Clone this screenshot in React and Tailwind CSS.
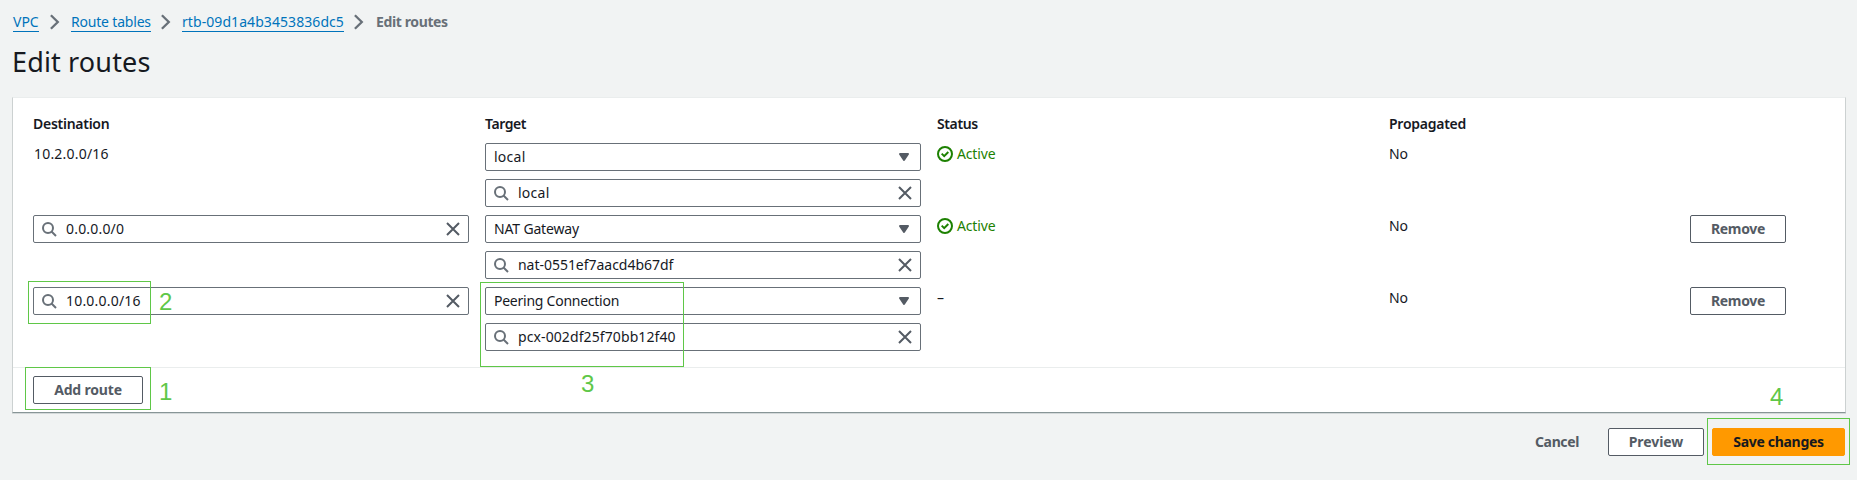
import React from "react";

function Icon({ children, className = "" }) {
  return (
    <svg width="16" height="16" viewBox="0 0 16 16" fill="none" stroke="currentColor" strokeWidth="2" className={"block shrink-0 " + className}>
      {children}
    </svg>
  );
}

const SearchIcon = () => (
  <Icon className="text-[#687078]">
    <circle cx="7" cy="7" r="5" />
    <path d="m15 15-4.5-4.5" />
  </Icon>
);

const CloseIcon = () => (
  <Icon className="text-[#545b64]">
    <path d="m2 2 12 12M14 2 2 14" />
  </Icon>
);

const CaretIcon = () => (
  <Icon className="text-[#545b64]">
    <path d="M4 5h8l-4 6-4-6z" fill="currentColor" strokeLinejoin="round" />
  </Icon>
);

const CheckIcon = () => (
  <Icon>
    <circle cx="8" cy="8" r="7" />
    <path d="m4.7 7.6 2.5 2.5 4.1-4.1" />
  </Icon>
);

const Chevron = () => (
  <svg width="12" height="16" viewBox="0 0 12 16" fill="none" stroke="#687078" strokeWidth="2.3" className="block">
    <path d="m1.9 1.2 6.9 6.8-6.9 6.8" />
  </svg>
);

function SearchField({ value, tracking }) {
  return (
    <div className="flex h-7 w-[436px] items-center rounded-[2px] border border-[#687078] bg-white pr-[7px] pl-[7px]">
      <SearchIcon />
      <span className={"ml-[9px] grow " + tracking}>{value}</span>
      <CloseIcon />
    </div>
  );
}

function SelectField({ value, tracking }) {
  return (
    <div className="flex h-7 w-[436px] items-center rounded-[2px] border border-[#687078] bg-white pr-2 pl-[8px]">
      <span className={"grow " + tracking}>{value}</span>
      <CaretIcon />
    </div>
  );
}

function Button({ children, className }) {
  return (
    <button className={"flex h-7 items-center justify-center rounded-[2px] border font-bold " + className}>
      {children}
    </button>
  );
}

const routes = [
  { dest: "10.2.0.0/16", dTrack: "tracking-[0.2px]", fixed: true, type: "local", tTrack: "tracking-[0.26px]", id: "local", iTrack: "tracking-[0.26px]", active: true },
  { dest: "0.0.0.0/0", dTrack: "tracking-[0.19px]", type: "NAT Gateway", tTrack: "tracking-[-0.16px]", id: "nat-0551ef7aacd4b67df", iTrack: "tracking-[-0.03px]", active: true },
  { dest: "10.0.0.0/16", dTrack: "tracking-[0.2px]", type: "Peering Connection", tTrack: "tracking-[-0.25px]", id: "pcx-002df25f70bb12f40", iTrack: "tracking-[0.1px]", active: false },
];

const columns = [
  ["Destination", "tracking-[-0.27px]"],
  ["Target", "tracking-[-0.42px]"],
  ["Status", "tracking-[-0.38px]"],
  ["Propagated", "tracking-[-0.26px]"],
];

function Crumb({ children, className }) {
  return <a className={"h-[18px] border-b border-[#0073bb] whitespace-nowrap text-[#0073bb] " + className}>{children}</a>;
}

const grid = "grid grid-cols-[452px_452px_452px_301px_96px]";

export default function App() {
  return (
    <div className="relative h-[480px] w-[1857px] overflow-hidden bg-[#f1f3f3] font-['Noto_Sans','Open_Sans',sans-serif] text-[14px] leading-[20px] text-[#16191f]">
      <nav className="flex h-[44px] items-start pt-[14px] pl-[13px] leading-[16px]">
        <Crumb className="w-[26px]">VPC</Crumb>
        <div className="w-[32px] pl-[10px]"><Chevron /></div>
        <Crumb className="w-[80px] tracking-[-0.19px]">Route tables</Crumb>
        <div className="w-[31px] pl-[9px]"><Chevron /></div>
        <Crumb className="w-[162px] tracking-[0.07px]">rtb-09d1a4b3453836dc5</Crumb>
        <div className="w-[32px] pl-[9px]"><Chevron /></div>
        <span className="font-bold tracking-[-0.38px] text-[#687078]">Edit routes</span>
      </nav>
      <h1 className="h-[53px] pl-[12px] text-[27px] leading-[36px] font-normal tracking-[0.15px]">Edit routes</h1>

      <section className="ml-[12px] h-[316px] w-[1834px] border border-t-[#eaeded] border-r-[#ccd1d1] border-b-[#879596] border-l-[#ccd1d1] bg-white shadow-[0_1px_0_0_rgba(0,28,36,0.12)]">
        <div className="h-[269px] pt-[16px] pl-5">
          <div className={grid + " h-[29px] font-semibold"}>
            {columns.map(([name, tracking]) => (
              <span key={name} className={tracking}>{name}</span>
            ))}
          </div>
          {routes.map((r) => (
            <div key={r.dest} className={grid + " h-[72px]"}>
              <div>
                {r.fixed ? <div className={"pt-[1px] pl-[1px] " + r.dTrack}>{r.dest}</div> : <SearchField value={r.dest} tracking={r.dTrack} />}
              </div>
              <div className="flex flex-col gap-2">
                <SelectField value={r.type} tracking={r.tTrack} />
                <SearchField value={r.id} tracking={r.iTrack} />
              </div>
              <div className="pt-[1px]">
                {r.active ? (
                  <span className="flex items-center gap-1 tracking-[-0.15px] text-[#1d8102]">
                    <CheckIcon />
                    Active
                  </span>
                ) : "–"}
              </div>
              <div className="pt-[1px] tracking-[-0.2px]">No</div>
              {r.fixed ? <div /> : <Button className="w-24 border-[#545b64] bg-white tracking-[-0.3px] text-[#545b64]">Remove</Button>}
            </div>
          ))}
        </div>
        <div className="h-[45px] border-t border-[#eaeded] pt-2 pl-5">
          <Button className="w-[110px] border-[#545b64] bg-white tracking-[-0.18px] text-[#545b64]">Add route</Button>
        </div>
      </section>

      <footer className="flex justify-end gap-2 pt-[15px] pr-3">
        <Button className="w-[86px] border-transparent tracking-[-0.38px] text-[#545b64]">Cancel</Button>
        <Button className="w-24 border-[#545b64] bg-white tracking-[-0.06px] text-[#545b64]">Preview</Button>
        <Button className="w-[133px] border-[#ff9900] bg-[#ff9900] tracking-[-0.3px]">Save changes</Button>
      </footer>

      <div className="pointer-events-none absolute inset-0 font-['Liberation_Sans',Arial,sans-serif] text-[24px] leading-[24px] text-[#5fc748]">
        <div className="absolute top-[367px] left-[25px] h-[43px] w-[126px] border border-[#5fc748]" />
        <span className="absolute top-[380px] left-[159px]">1</span>
        <div className="absolute top-[281px] left-[28px] h-[43px] w-[123px] border border-[#5fc748]" />
        <span className="absolute top-[290px] left-[159px]">2</span>
        <div className="absolute top-[282px] left-[480px] h-[85px] w-[204px] border border-[#5fc748]" />
        <span className="absolute top-[372px] left-[581px]">3</span>
        <div className="absolute top-[418px] left-[1707px] h-[47px] w-[143px] border border-[#5fc748]" />
        <span className="absolute top-[385px] left-[1770px]">4</span>
      </div>
    </div>
  );
}
